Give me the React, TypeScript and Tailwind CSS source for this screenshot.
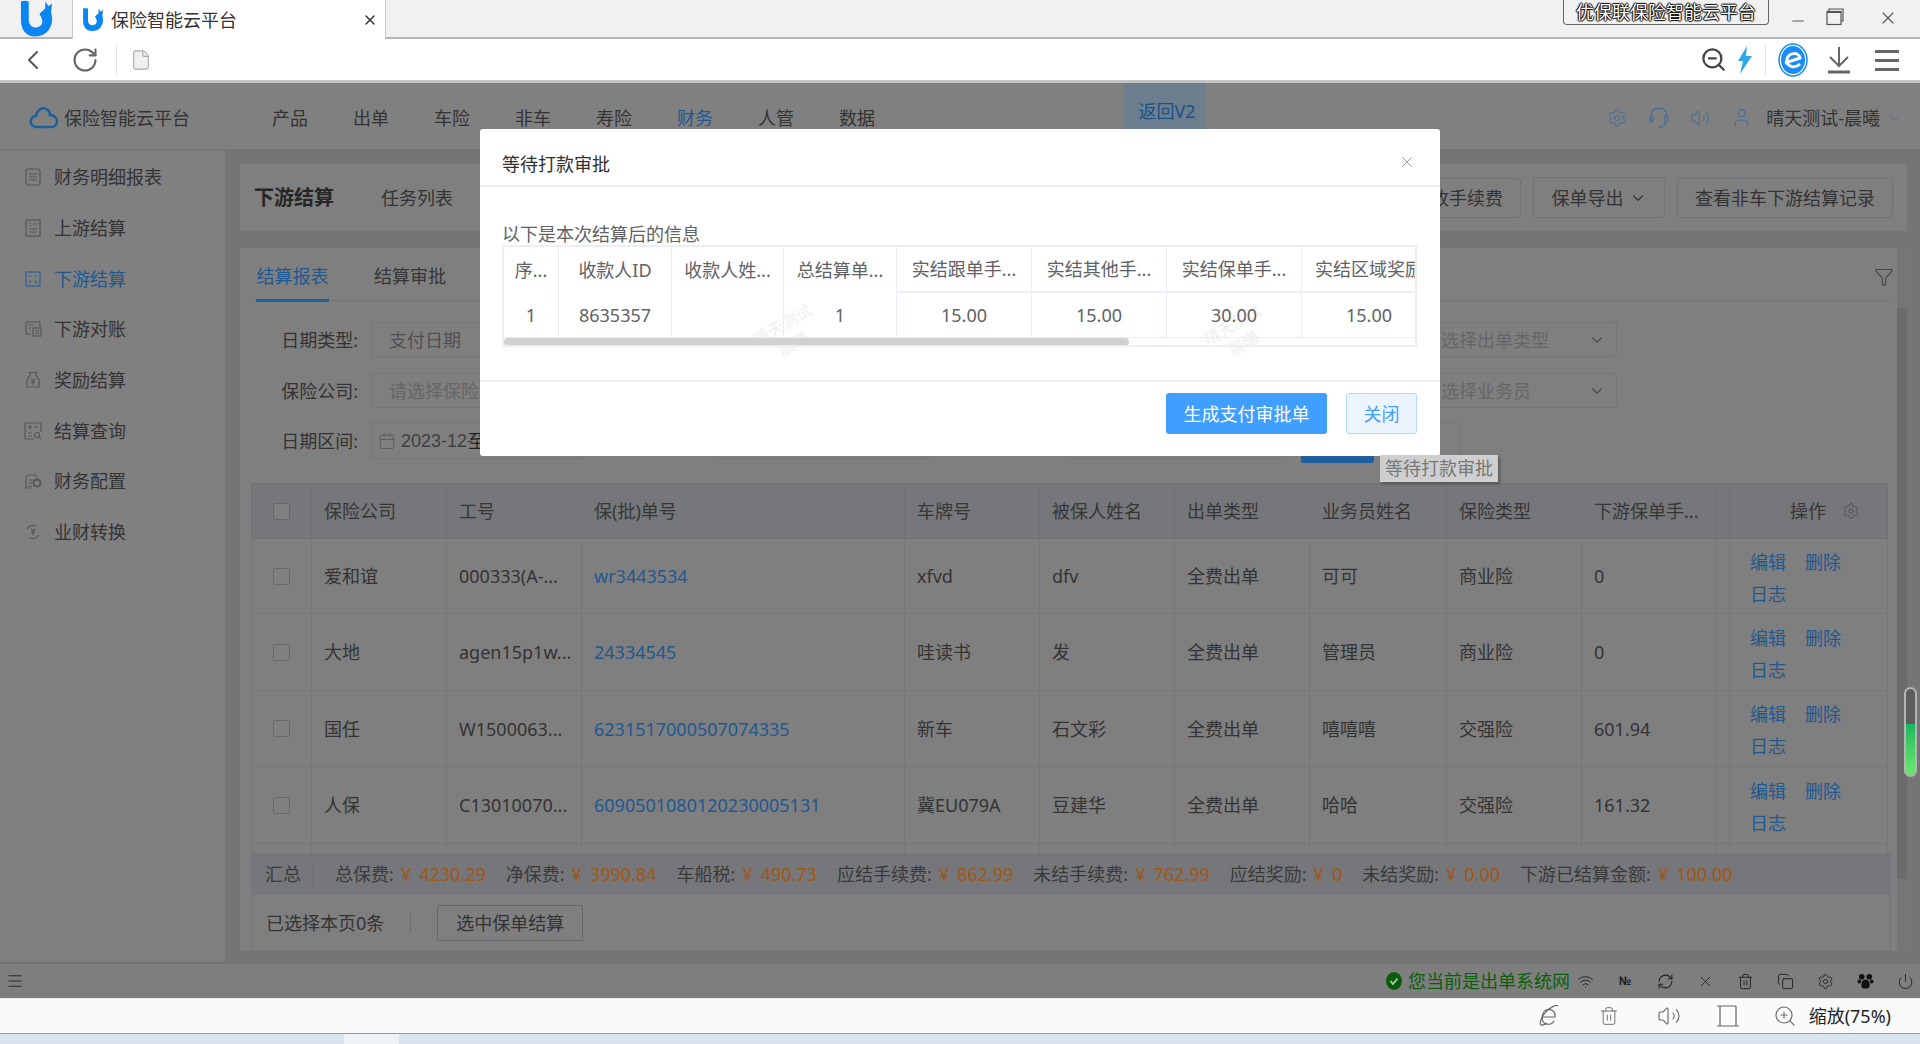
import { ChevronDown, Settings, Volume2, User, Filter, Calendar, X, Menu, ChevronLeft, RotateCw, File, Wifi, Trash2, Copy, Power, RefreshCw, Minus, ZoomIn, ZoomOut } from 'lucide-react'
import type { ReactNode } from 'react'

const NAV = ['产品', '出单', '车险', '非车', '寿险', '财务', '人管', '数据']
const MENU = ['财务明细报表', '上游结算', '下游结算', '下游对账', '奖励结算', '结算查询', '财务配置', '业财转换']
const HEADERS = ['保险公司', '工号', '保(批)单号', '车牌号', '被保人姓名', '出单类型', '业务员姓名', '保险类型', '下游保单手...', '下游']
const WIDTHS = ['w-[60px]', 'w-[135px]', 'w-[135px]', 'w-[323px]', 'w-[135px]', 'w-[135px]', 'w-[135px]', 'w-[137px]', 'w-[135px]', 'w-[135px]', 'w-[13px]', 'w-[158px]']

const ROWS = [
  { h: 'h-[75px]', c: ['爱和谊', '000333(A-...', 'wr3443534', 'xfvd', 'dfv', '全费出单', '可可', '商业险', '0', ''] },
  { h: 'h-[77px]', c: ['大地', 'agen15p1w...', '24334545', '哇读书', '发', '全费出单', '管理员', '商业险', '0', ''] },
  { h: 'h-[76px]', c: ['国任', 'W1500063...', '6231517000507074335', '新车', '石文彩', '全费出单', '嘻嘻嘻', '交强险', '601.94', ''] },
  { h: 'h-[77px]', c: ['人保', 'C13010070...', '6090501080120230005131', '冀EU079A', '豆建华', '全费出单', '哈哈', '交强险', '161.32', ''] },
  { h: 'h-[76px]', c: ['', '', '', '', '', '', '', '', '', ''] },
]

const SUMMARY = [
  ['总保费', '4230.29'], ['净保费', '3990.84'], ['车船税', '490.73'], ['应结手续费', '862.99'],
  ['未结手续费', '762.99'], ['应结奖励', '0'], ['未结奖励', '0.00'], ['下游已结算金额', '100.00'],
]

const MODAL_HEAD = ['序...', '收款人ID', '收款人姓...', '总结算单...', '实结跟单手...', '实结其他手...', '实结保单手...', '实结区域奖励']
const MODAL_ROW = ['1', '8635357', '', '1', '15.00', '15.00', '30.00', '15.00']
const MODAL_W = ['w-[55px]', 'w-[113px]', 'w-[112px]', 'w-[113px]', 'w-[135px]', 'w-[135px]', 'w-[135px]', 'w-[135px]']

const PAGE_MARKS = ['left-[305px] top-[545px]', 'left-[760px] top-[545px]', 'left-[1655px] top-[545px]', 'left-[305px] top-[785px]', 'left-[760px] top-[785px]', 'left-[1655px] top-[785px]', 'left-[305px] top-[310px]', 'left-[1655px] top-[310px]']

function Logo({ className }: { className: string }) {
  return (
    <svg viewBox="0 0 34 37" className={className} fill="#0a86f2">
      <path d="M1 1C3 0 7 0 9 1L9 20C9 28 18 30 22 25C24.500 21 22 17 20 14C21 12 24 11 26 8L26 1L29.500 6L33 3L32 12C35.500 22 31 37 16 37C5 37 1 29 1 20Z" />
    </svg>
  )
}

function Doc({ children }: { children: ReactNode }) {
  return (
    <svg viewBox="0 0 20 20" className="w-[20px] h-[20px]" fill="none" stroke="#565656" strokeWidth="1.200">
      {children}
    </svg>
  )
}

const MENU_ICONS = [
  <Doc key="0"><rect x="3" y="2" width="14" height="16" rx="2" /><path d="M6 7h8M6 10h8M6 13h8" /></Doc>,
  <Doc key="1"><rect x="3" y="2" width="14" height="16" /><path d="M6 5h2M6 7.500h2M10 6h4M6 11h8M6 14h8" /></Doc>,
  <svg key="2" viewBox="0 0 20 20" className="w-[20px] h-[20px]" fill="none" stroke="#2a5f9a" strokeWidth="1.200"><rect x="3" y="3" width="14" height="14" /><path d="M5.500 7h3M11 7h3M5.500 13l3-1M11.500 12l2.500 2" /></svg>,
  <Doc key="3"><path d="M3 3h14v5M3 3v12h5" /><rect x="10" y="9" width="8" height="8" /><path d="M5.500 6h5M5.500 9h2M12 12h4M12 14.500h4" /></Doc>,
  <Doc key="4"><path d="M7.500 5L6.500 2.500h7L12.500 5C16 8 17 12 16 17H4C3 12 4 8 7.500 5Z" /><path d="M8 9l2 2 2-2M10 11v4M8 12.500h4" /></Doc>,
  <Doc key="5"><path d="M18 11V2H2v16h9" /><path d="M5 6h4M7 4v4M11 6h4M5 12h4M5 15h4" /><circle cx="14" cy="14" r="2.500" /><path d="M16 16l2 2" /></Doc>,
  <Doc key="6"><path d="M9 17H3V6l2-2h7l2 2" /><path d="M6 9h4M6 12h3M6 15h3" /><circle cx="14" cy="12" r="3.500" strokeWidth="2" /></Doc>,
  <Doc key="7"><path d="M4 7a7 7 0 0 1 9-3M16 13a7 7 0 0 1-9 3" /><path d="M8 7l2 2 2-2M10 9v4M8 10.500h4" /></Doc>,
]

function Mark({ className, color }: { className: string; color: string }) {
  return (
    <div className={`absolute pointer-events-none -rotate-[30deg] text-center text-[16px] leading-[22px] whitespace-nowrap ${color} ${className}`}>
      晴天测试<br />晨曦
    </div>
  )
}

function Field({ className, text, muted, caret }: { className: string; text?: string; muted?: boolean; caret?: boolean }) {
  return (
    <div className={`border border-[#74767b] rounded-[2px] pl-[17px] pr-[10px] flex items-center justify-between overflow-hidden ${muted ? 'text-[#666]' : 'text-[#505050]'} ${className}`}>
      <span className="whitespace-nowrap">{text}</span>
      {caret && <ChevronDown className="w-[18px] h-[18px] text-[#4c4c4c]" strokeWidth={1.500} />}
    </div>
  )
}

function Label({ children }: { children: ReactNode }) {
  return <div className="w-[107px] text-right whitespace-nowrap mr-[13px] text-[#333]">{children}</div>
}

function TitleBar() {
  return (
    <div className="h-[39px] bg-[#f1f1f1] border-b-2 border-[#b4b4b4] flex relative shrink-0">
      <div className="w-[72px] flex pl-[20px]">
        <Logo className="w-[33px] h-[37px]" />
      </div>
      <div className="w-[314px] h-[39px] bg-white border-x border-[#c8c8c8] flex items-center pl-[9px] pr-[7px] text-[#333]">
        <Logo className="w-[22px] h-[23px]" />
        <span className="ml-[7px] flex-1">保险智能云平台</span>
        <X className="w-[16px] h-[16px] text-[#333]" strokeWidth={2.200} />
      </div>
      <div className="ml-auto flex">
        <div className="w-[206px] h-[25px] border border-t-0 border-[#666] rounded-b-[4px] text-center leading-[24px] text-white [text-shadow:1px_0_1px_#000,-1px_0_1px_#000,0_1px_1px_#000,0_-1px_1px_#000]">
          优保联保险智能云平台
        </div>
        <div className="flex items-start pt-[8px] text-[#555]">
          <Minus className="w-[18px] h-[18px] ml-[20px] mt-[4px]" strokeWidth={1.300} />
          <svg viewBox="0 0 18 18" className="w-[18px] h-[18px] ml-[19px]" fill="none" stroke="#555" strokeWidth="1.200">
            <path d="M3 3V1h14v12h-2" />
            <rect x="1" y="3.500" width="14" height="13" />
            <path d="M1 4h14" strokeWidth="2" />
          </svg>
          <X className="w-[20px] h-[20px] ml-[34px] mr-[22px]" strokeWidth={1.300} />
        </div>
      </div>
    </div>
  )
}

function Toolbar() {
  return (
    <div className="h-[44px] bg-white border-b-[3px] border-[#c4c4c4] flex items-center shrink-0 text-[#555]">
      <ChevronLeft className="w-[32px] h-[32px] ml-[17px]" strokeWidth={1.500} />
      <RotateCw className="w-[28px] h-[28px] ml-[22px] text-[#666]" strokeWidth={1.800} />
      <div className="w-px h-[32px] bg-[#e4e4e4] ml-[17px]" />
      <File className="w-[22px] h-[26px] ml-[13px] text-[#aaa]" strokeWidth={1.200} fill="#f0f0f0" />
      <div className="ml-auto flex items-center">
        <ZoomOut className="w-[27px] h-[27px] text-[#444]" strokeWidth={2} />
        <svg viewBox="0 0 14 28" className="w-[14px] h-[28px] ml-[11px]" fill="#2ea8e6">
          <path d="M9 0L0 15H5L2 28L14 10H8Z" />
        </svg>
        <div className="w-px h-[32px] bg-[#e4e4e4] ml-[13px]" />
        <svg viewBox="0 0 30 34" className="w-[30px] h-[34px] ml-[12px]">
          <ellipse cx="15" cy="17" rx="14" ry="16" fill="#fff" stroke="#1a8cf5" strokeWidth="1.500" />
          <ellipse cx="15" cy="17" rx="12" ry="14" fill="#1a8cf5" />
          <path d="M7 20L22 15C21 9 11 9 9 16C8 24 17 26 22 21" fill="none" stroke="#fff" strokeWidth="3" />
        </svg>
        <svg viewBox="0 0 24 28" className="w-[24px] h-[28px] ml-[19px]" fill="none" stroke="#666" strokeWidth="2">
          <path d="M12 1V20M3 11L12 20L21 11" />
          <path d="M1 26H23" strokeWidth="3" />
        </svg>
        <svg viewBox="0 0 24 24" className="w-[24px] h-[24px] ml-[24px] mr-[21px]" fill="#666">
          <rect y="2" width="24" height="3" /><rect y="11" width="24" height="3" /><rect y="20" width="24" height="3" />
        </svg>
      </div>
    </div>
  )
}

function AppHeader() {
  return (
    <div className="h-[67px] border-b border-[#757575] flex shrink-0 bg-[#808080] text-[#333]">
      <svg viewBox="0 0 30 24" className="w-[30px] h-[26px] ml-[29px] mt-[21px]" fill="none" stroke="#1c5f9f" strokeWidth="2.500">
        <path d="M8 22C3 22 1 18 2 15C3 12 5 11 7 11C8 5 13 2 17 4C20 5 21 8 21 10C25 10 28 13 28 16C28 20 25 22 22 22Z" />
      </svg>
      <div className="ml-[5px] mt-[23px] w-[208px]">保险智能云平台</div>
      <nav className="flex gap-[45px] mt-[23px]">
        {NAV.map(n => (
          <span key={n} className={n === '财务' ? 'text-[#1f5891]' : ''}>{n}</span>
        ))}
      </nav>
      <div className="w-[83px] h-[66px] ml-[248px] bg-[#6d7f8e] text-center pt-[16px] pl-[5px] text-[#1a5288]">返回V2</div>
      <div className="ml-auto flex items-center text-[#4a6f94] pt-[3px]">
        <Settings className="w-[20px] h-[20px]" strokeWidth={1.300} />
        <svg viewBox="0 0 20 22" className="w-[20px] h-[22px] ml-[22px]" fill="none" stroke="currentColor" strokeWidth="1.300">
          <path d="M3 15C1 12 1 9 3 5C6 0 14 0 17 5C18 7 18 9 18 11" />
          <rect x="1" y="9" width="3" height="6" rx="1.500" />
          <rect x="15.500" y="9" width="3" height="6" rx="1.500" />
          <path d="M17 15C16 19 13 20 10 20" />
        </svg>
        <Volume2 className="w-[20px] h-[20px] ml-[21px]" strokeWidth={1.300} />
        <User className="w-[21px] h-[21px] ml-[21px]" strokeWidth={1.300} />
        <span className="ml-[14px] text-[#333]">晴天测试-晨曦</span>
        <ChevronDown className="w-[18px] h-[18px] ml-[6px] mr-[16px]" strokeWidth={1.200} />
      </div>
    </div>
  )
}

function Sidebar() {
  return (
    <aside className="w-[226px] shrink-0 bg-[#808080] border-r border-[#757575] pt-[2px]">
      {MENU.map((m, i) => (
        <div key={m} className={`h-[50.7px] flex items-center pl-[23px] ${i === 2 ? 'text-[#1f5891]' : 'text-[#333]'}`}>
          {MENU_ICONS[i]}
          <span className="ml-[11px]">{m}</span>
        </div>
      ))}
    </aside>
  )
}

function Filters() {
  return (
    <div className="text-[#333]">
      <div className="flex items-center mt-[21px] h-[35px]">
        <Label>日期类型:</Label>
        <Field className="w-[213px] h-[35px]" text="支付日期" />
        <Field className="w-[212px] h-[35px] ml-[133px]" />
        <Field className="w-[213px] h-[35px] ml-[140px]" />
        <Field className="w-[212px] h-[35px] ml-[123px]" text="请选择出单类型" muted caret />
      </div>
      <div className="flex items-center mt-[16px] h-[35px]">
        <Label>保险公司:</Label>
        <Field className="w-[213px] h-[35px]" text="请选择保险公司" muted />
        <Field className="w-[212px] h-[35px] ml-[133px]" />
        <Field className="w-[213px] h-[35px] ml-[140px]" />
        <Field className="w-[212px] h-[35px] ml-[123px]" text="请选择业务员" muted caret />
      </div>
      <div className="flex items-center mt-[14px] h-[41px]">
        <div className="flex self-start items-center h-[37px]">
          <Label>日期区间:</Label>
        </div>
        <div className="w-[213px] h-[37px] self-start border border-[#74767b] rounded-[2px] flex items-center pl-[6px] overflow-hidden text-[#404040]">
          <Calendar className="w-[18px] h-[18px] text-[#5c5c5c] shrink-0" strokeWidth={1.300} />
          <span className="ml-[5px] whitespace-nowrap font-['Liberation_Sans']">2023-12-</span>
          <span className="-ml-[5px] text-[#222] whitespace-nowrap">至</span>
        </div>
        <Field className="w-[212px] h-[37px] self-start ml-[133px]" />
        <Field className="w-[213px] h-[37px] self-start ml-[140px]" />
        <div className="w-[73px] h-[41px] ml-[19px] bg-[#1f5f9e] rounded-[2px]" />
        <div className="w-[76px] h-[38px] self-start ml-[10px] border border-[#74767b] rounded-[2px] text-center leading-[36px]">重置</div>
      </div>
    </div>
  )
}

function PolicyTable() {
  return (
    <div className="mt-[20px] h-[370px] overflow-hidden relative">
      <table className="table-fixed w-[1636px] border-collapse">
        <colgroup>
          {WIDTHS.map((w, i) => <col key={i} className={w} />)}
        </colgroup>
        <thead>
          <tr className="h-[55px] bg-[#75777b] text-[#363636]">
            <th className="border border-[#6f7175] font-normal">
              <div className="w-[17px] h-[17px] mx-auto border border-[#65676b] rounded-[2px] bg-[#808080]" />
            </th>
            {HEADERS.map(h => (
              <th key={h} className="border border-[#6f7175] font-normal text-left pl-[12px] overflow-hidden whitespace-nowrap">{h}</th>
            ))}
            <th className="border border-[#6f7175] font-normal">
              <div className="flex items-center justify-end pr-[27px]">
                <span>操作</span>
                <Settings className="w-[18px] h-[18px] ml-[16px] text-[#505050]" strokeWidth={1.300} />
              </div>
            </th>
          </tr>
        </thead>
        <tbody>
          {ROWS.map((r, i) => (
            <tr key={i} className={`${r.h} text-[#333]`}>
              <td className="border border-[#74767a]">
                <div className="w-[17px] h-[17px] mx-auto border border-[#67696d] rounded-[2px] bg-[#808080]" />
              </td>
              {r.c.map((c, j) => (
                <td key={j} className={`border border-[#74767a] pl-[12px] overflow-hidden whitespace-nowrap ${j === 2 ? 'text-[#1f5891]' : ''}`}>{c}</td>
              ))}
              <td className="border border-[#74767a] text-[#1f5891] pl-[20px] pt-[3px] border-l-[#70727a]">
                {r.c[0] && (
                  <>
                    <div className="flex gap-[19px] leading-[32px]"><span>编辑</span><span>删除</span></div>
                    <div className="leading-[32px]">日志</div>
                  </>
                )}
              </td>
            </tr>
          ))}
        </tbody>
      </table>
    </div>
  )
}

function SummaryBar() {
  return (
    <div className="h-[42px] bg-[#75777b] flex items-center pl-[14px] text-[#3a3a3a] whitespace-nowrap">
      <span>汇总</span>
      <div className="w-px h-[26px] bg-[#6a6c70] ml-[12px] mr-[21px]" />
      <div className="flex gap-[20px]">
        {SUMMARY.map(([k, v]) => (
          <span key={k}>
            {k}:<span className="text-[#a4560f] ml-[7px]">¥</span><span className="text-[#a4560f] ml-[8px]">{v}</span>
          </span>
        ))}
      </div>
    </div>
  )
}

function Settlement() {
  return (
    <section className="mt-[17px] h-[703px] bg-[#7f7f7f] flex pl-[11px] shrink-0 w-[1667px]">
      <div className="w-[1640px]">
        <div className="h-[53px] border-b border-[#757575] flex relative">
          <div className="ml-[5px] w-[73px] text-[#1f5891] pt-[16px] border-b-[3px] border-[#1f5f9e] h-[54px] text-center">结算报表</div>
          <div className="ml-[45px] pt-[16px] text-[#363636]">结算审批</div>
          <Filter className="absolute right-[-3px] top-[19px] w-[20px] h-[20px] text-[#444]" strokeWidth={1.300} />
        </div>
        <Filters />
        <PolicyTable />
        <SummaryBar />
        <div className="h-[56px] border border-t-0 border-[#76777a] flex items-center pl-[14px] text-[#333]">
          <span>已选择本页0条</span>
          <div className="w-px h-[18px] bg-[#6c6c6c] ml-[26px] mr-[26px]" />
          <button className="w-[146px] h-[36px] border border-[#66686d] rounded-[2px] text-center">选中保单结算</button>
        </div>
      </div>
      <div className="ml-[6px] w-[10px] bg-[#767676]">
        <div className="w-[10px] h-[571px] mt-[60px] bg-[#6b6b6b]" />
      </div>
    </section>
  )
}

function Paw() {
  return (
    <svg viewBox="0 0 18 18" className="w-[17px] h-[17px]" fill="#111">
      <circle cx="5" cy="4" r="3" /><circle cx="13" cy="4" r="3" />
      <circle cx="2.500" cy="9" r="2" /><circle cx="15.500" cy="9" r="2" />
      <path d="M9 7C13 7 14 12 13 15C12 17 6 17 5 15C4 12 5 7 9 7Z" />
    </svg>
  )
}

function StatusBar() {
  return (
    <div className="h-[36px] shrink-0 bg-[#7e7e7e] border-t-2 border-[#737373] flex items-center text-[#222]">
      <Menu className="w-[18px] h-[18px] ml-[6px] text-[#2c2c2c]" strokeWidth={1.500} />
      <div className="ml-auto flex items-center">
        <svg viewBox="0 0 16 18" className="w-[16px] h-[18px]">
          <ellipse cx="8" cy="9" rx="8" ry="9" fill="#0a5c0a" />
          <path d="M4.500 9L7 12L11.500 6.500" fill="none" stroke="#a8c8a8" strokeWidth="1.800" />
        </svg>
        <span className="ml-[6px] text-[#0b5f0b] -mr-[5px]">您当前是出单系统网</span>
        <div className="w-[40px] flex justify-center"><Wifi className="w-[17px] h-[17px]" strokeWidth={1.300} /></div>
        <div className="w-[40px] text-center text-[12px] leading-[18px] font-bold">№</div>
        <div className="w-[40px] flex justify-center"><RefreshCw className="w-[17px] h-[17px]" strokeWidth={1.500} /></div>
        <div className="w-[40px] flex justify-center"><X className="w-[17px] h-[17px]" strokeWidth={1.300} /></div>
        <div className="w-[40px] flex justify-center"><Trash2 className="w-[17px] h-[17px]" strokeWidth={1.300} /></div>
        <div className="w-[40px] flex justify-center"><Copy className="w-[17px] h-[17px]" strokeWidth={1.300} /></div>
        <div className="w-[40px] flex justify-center"><Settings className="w-[17px] h-[17px]" strokeWidth={1.300} /></div>
        <div className="w-[40px] flex justify-center"><Paw /></div>
        <div className="w-[40px] flex justify-center -mr-[5px]"><Power className="w-[17px] h-[17px]" strokeWidth={1.300} /></div>
      </div>
    </div>
  )
}

function BottomBar() {
  return (
    <div className="h-[35px] shrink-0 bg-[#fafafa] border-t border-[#ededed] flex items-center justify-end text-[#666]">
      <svg viewBox="0 0 20 22" className="w-[20px] h-[22px]" fill="none" stroke="#666" strokeWidth="1.200">
        <path d="M3 12H16C17 6 11 3 7 5C2 8 2 17 7 19C11 20 14 18 15 16" />
        <path d="M19 1C17 -1 10 3 6 8C2 13 0 19 2 20C4 21 6 19 8 18" />
      </svg>
      <Trash2 className="w-[20px] h-[24px] ml-[40px]" strokeWidth={1.100} />
      <Volume2 className="w-[24px] h-[24px] ml-[38px]" strokeWidth={1.100} />
      <svg viewBox="0 0 24 24" className="w-[24px] h-[24px] ml-[35px]" fill="none" stroke="#666" strokeWidth="1.200">
        <path d="M1 2H20M4 2V22M20 2V22M1 22H23" />
      </svg>
      <ZoomIn className="w-[24px] h-[24px] ml-[33px]" strokeWidth={1.100} />
      <span className="ml-[12px] mr-[29px] text-[#222]">缩放(75%)</span>
    </div>
  )
}

function PayModal() {
  return (
    <div className="absolute left-[480px] top-[129px] w-[960px] h-[327px] bg-white rounded-[3px] text-[#606266]">
      <div className="h-[58px] border-b-2 border-[#edeff3] flex items-center pl-[22px] pt-[13px] text-[#303133]">
        等待打款审批
        <X className="absolute right-[24px] top-[24px] w-[18px] h-[18px] text-[#909399]" strokeWidth={1.200} />
      </div>
      <div className="h-[195px] pl-[22px] pr-[23px] relative border-b-2 border-[#edeff3]">
        <Mark className="left-[276px] top-[125px]" color="text-[#efefef]" />
        <Mark className="left-[726px] top-[125px]" color="text-[#efefef]" />
        <div className="pt-[36px] leading-[22px] h-[58px] text-[#606266]">以下是本次结算后的信息</div>
        <div className="border-2 border-[#ebeef5] w-[915px] h-[102px] overflow-hidden relative">
          <div className="flex h-[46px]">
            {MODAL_HEAD.map((h, i) => (
              <div key={h} className={`${MODAL_W[i]} shrink-0 border-r border-[#ebeef5] flex items-center justify-center whitespace-nowrap overflow-hidden ${i > 3 ? 'border-b-2' : ''}`}>{h}</div>
            ))}
          </div>
          <div className="flex h-[44px]">
            {MODAL_ROW.map((v, i) => (
              <div key={i} className={`${MODAL_W[i]} shrink-0 border-r border-[#ebeef5] flex items-center justify-center`}>{v}</div>
            ))}
          </div>
          <div className="h-[10px] border-t border-[#ebeef5]">
            <div className="w-[625px] h-[8px] rounded-[4px] bg-[#d1d1d1]" />
          </div>
        </div>
      </div>
      <div className="flex justify-end pt-[11px] pr-[23px] gap-[19px]">
        <button className="w-[161px] h-[41px] bg-[#409eff] rounded-[3px] text-white">生成支付审批单</button>
        <button className="w-[71px] h-[41px] bg-[#ecf5ff] border border-[#b3d8ff] rounded-[3px] text-[#409eff]">关闭</button>
      </div>
    </div>
  )
}

export default function App() {
  return (
    <div className="w-[1920px] h-[1044px] overflow-hidden relative flex flex-col text-[18px] leading-[24px] [font-family:'Noto_Sans','Noto_Sans_CJK_SC',sans-serif]">
      <TitleBar />
      <Toolbar />
      <AppHeader />
      <div className="flex h-[812px] shrink-0 bg-[#757575]">
        <Sidebar />
        <main className="pl-[14px] pt-[14px]">
          <section className="h-[67px] w-[1667px] bg-[#7f7f7f] flex items-center pl-[14px] text-[#333]">
            <h2 className="text-[20px] font-bold text-[#262626]">下游结算</h2>
            <span className="ml-[47px]">任务列表</span>
            <div className="ml-auto flex items-center gap-[12px] pr-[14px]">
              <button className="h-[40px] pl-[18px] pr-[17px] border border-[#707277] rounded-[3px] whitespace-nowrap">未结算收手续费</button>
              <button className="h-[41px] w-[132px] border border-[#707277] rounded-[3px] flex items-center justify-center">
                保单导出<ChevronDown className="w-[18px] h-[18px] ml-[5px]" strokeWidth={1.500} />
              </button>
              <button className="h-[40px] w-[216px] border border-[#707277] rounded-[3px]">查看非车下游结算记录</button>
            </div>
          </section>
          <Settlement />
        </main>
      </div>
      <StatusBar />
      <BottomBar />
      <div className="h-[11px] shrink-0 border-t border-[#999] bg-[#dae4ee] pl-[344px]">
        <div className="w-[55px] h-full bg-[#eff3f8]" />
      </div>

      {PAGE_MARKS.map(c => <Mark key={c} className={c} color="text-white/[0.02]" />)}
      <PayModal />
      <div className="absolute left-[1380px] top-[455px] w-[118px] h-[27px] bg-[#cfcfcf] text-center leading-[26px] text-[#777] text-[18px] whitespace-nowrap shadow-[2px_2px_3px_rgba(0,0,0,0.3)]">
        等待打款审批
      </div>
      <div className="absolute left-[1904px] top-[687px] w-[13px] h-[90px] rounded-[7px] border-2 border-[#b5b5b5] bg-[#5e5e5e] overflow-hidden">
        <div className="mt-[35px] h-[55px] bg-gradient-to-b from-[#14b860] to-[#6fee70]" />
      </div>
    </div>
  )
}
